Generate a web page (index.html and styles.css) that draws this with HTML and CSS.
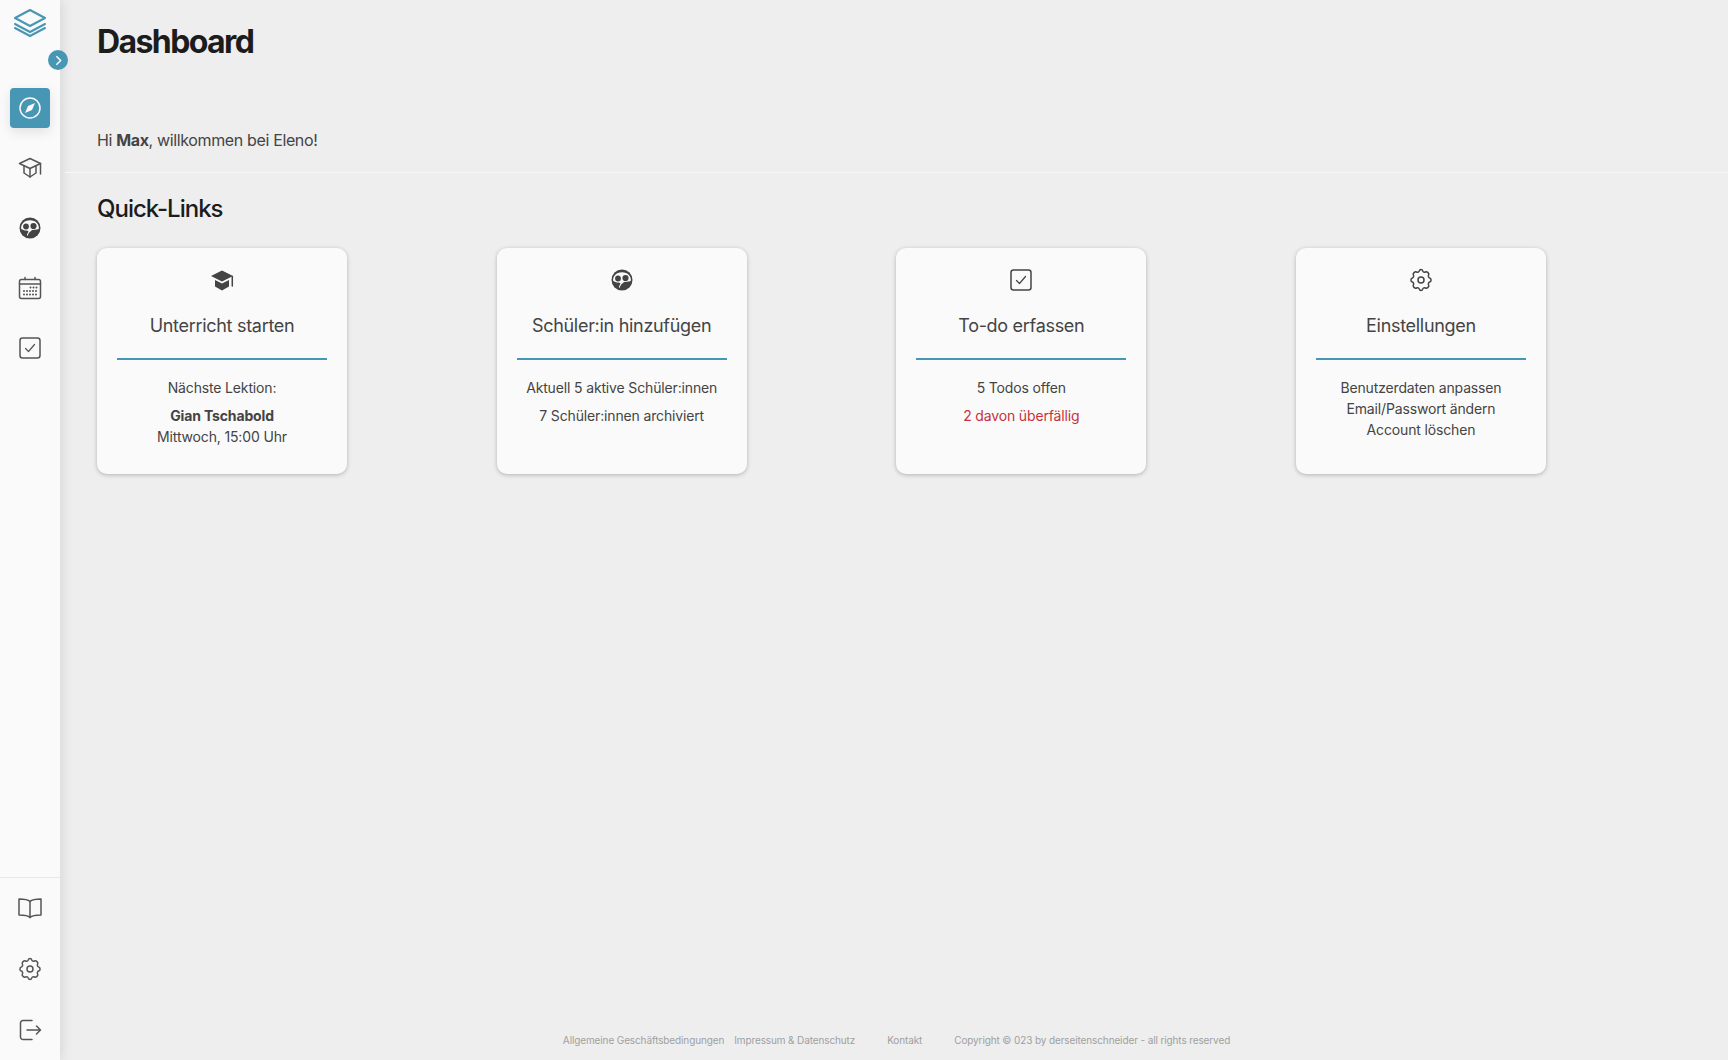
FILE: index.html
```html
<!DOCTYPE html>
<html lang="de">
<head>
    <meta charset="UTF-8">
    <meta name="viewport" content="width=device-width, initial-scale=1.0">
    <title>Eleno - Dashboard</title>
    <link rel="stylesheet" href="styles.css">
</head>
<body>
    <svg class="icon-defs" width="0" height="0">
        <symbol id="i-cap" viewBox="0 0 24 24">
            <path d="M12 2.500 1.500 7.500l10.500 5 10.500-5z"/>
            <path d="M6 10v7l6 4 6-4v-7"/>
            <path d="M12 12.500V21"/>
            <path d="M22.500 7.500V18"/>
        </symbol>
        <symbol id="i-students" viewBox="0 0 24 24">
            <circle class="solid" cx="12" cy="12" r="10.500"/>
            <path class="solid-light" d="M3.200 13c-.6-4.500 2.800-8.700 8.800-8.700s9.500 4.200 8.800 8.700l-1.800 .5-5 .6-3 3-1.500 3.200-1-3.500-2.500-2.500z"/>
            <circle class="solid" cx="8" cy="10.500" r="2.900"/>
            <circle class="solid" cx="15.500" cy="10" r="3.100"/>
            <path class="solid" d="M4.500 15.500c1-1.300 5-1.300 6 0l-1.500 3-1.500.5zM10 20.500c.4-3.800 2.500-5.500 6-5.500 1.600 0 3 .3 3.800 .9-1.500 3-4.400 5-7.800 5z"/>
        </symbol>
        <symbol id="i-calendar" viewBox="0 0 24 24">
            <rect x="1.500" y="3.500" width="21" height="19" rx="2"/>
            <path d="M1.500 8h21M7 1.500v2M17 1.500v2"/>
            <path class="dots" d="M12.500 11.500h.01M15.500 11.500h.01M18.500 11.500h.01M6 15h.01M9 15h.01M12 15h.01M15 15h.01M18 15h.01M6 18.500h.01M9 18.500h.01M12 18.500h.01M15 18.500h.01M18 18.500h.01"/>
        </symbol>
        <symbol id="i-check" viewBox="0 0 24 24">
            <rect x="2" y="2" width="20" height="20" rx="2.500"/>
            <path class="thin" d="m7.500 12.500 3 3 6-7"/>
        </symbol>
        <symbol id="i-gear" viewBox="0 0 24 24">
            <circle cx="12" cy="12" r="3"/>
            <path d="M10.300 2.900c.4-1.800 3-1.800 3.400 0a1.800 1.800 0 0 0 2.700 1.100c1.600-1 4.200 1.600 3.200 3.200a1.800 1.800 0 0 0 1.100 2.700c1.800.4 1.800 3.800 0 4.200a1.800 1.800 0 0 0-1.100 2.700c1 1.600-1.600 4.200-3.200 3.200a1.800 1.800 0 0 0-2.700 1.100c-.4 1.800-3 1.800-3.400 0a1.800 1.800 0 0 0-2.700-1.100c-1.600 1-4.200-1.600-3.200-3.200a1.800 1.800 0 0 0-1.100-2.700c-1.800-.4-1.800-3.800 0-4.200a1.800 1.800 0 0 0 1.100-2.700c-1-1.600 1.600-4.200 3.200-3.200a1.800 1.800 0 0 0 2.700-1.100z"/>
        </symbol>
    </svg>

    <div class="layout">
        <!-- Sidebar -->
        <aside class="sidebar">
            <div class="logo">
                <svg class="logo-icon" viewBox="0 0 32 30">
                    <path d="M16 2 1 10l15 8 15-8z"/>
                    <path d="m1 16 15 8 15-8"/>
                    <path d="m1 20 15 8 15-8"/>
                </svg>
            </div>
            <button class="sidebar-toggle">
                <svg viewBox="0 0 24 24"><path d="m9 5 7 7-7 7"/></svg>
            </button>

            <nav class="nav-top">
                <a class="nav-item active">
                    <svg class="icon" viewBox="0 0 24 24">
                        <circle cx="12" cy="12" r="10"/>
                        <path class="solid-light" d="m17 7-7 3-3 7 7-3z"/>
                    </svg>
                </a>
                <a class="nav-item"><svg class="icon"><use href="#i-cap"/></svg></a>
                <a class="nav-item"><svg class="icon"><use href="#i-students"/></svg></a>
                <a class="nav-item"><svg class="icon"><use href="#i-calendar"/></svg></a>
                <a class="nav-item"><svg class="icon"><use href="#i-check"/></svg></a>
            </nav>

            <nav class="nav-bottom">
                <a class="nav-item">
                    <svg class="icon" viewBox="0 0 24 24">
                        <path d="M12 5.500C10 3.500 5.500 3 1 3v16c4.500 0 9 .5 11 2.500 2-2 6.500-2.500 11-2.500V3c-4.500 0-9 .5-11 2.500z"/>
                        <path d="M12 5.500v16"/>
                    </svg>
                </a>
                <a class="nav-item"><svg class="icon"><use href="#i-gear"/></svg></a>
                <a class="nav-item">
                    <svg class="icon" viewBox="0 0 24 24">
                        <path d="M14 2.500H5A2.500 2.500 0 0 0 2.500 5v14A2.500 2.500 0 0 0 5 21.500h9"/>
                        <path d="M9 12h13.500M18.500 8l4 4-4 4"/>
                    </svg>
                </a>
            </nav>
        </aside>

        <main class="main">
            <div class="header">
                <h1>Dashboard</h1>
                <p class="welcome">Hi <b>Max</b>, willkommen bei Eleno!</p>
            </div>

            <section class="quick-links">
                <h2>Quick-Links</h2>
                <div class="cards">
                    <div class="card">
                        <svg class="card-icon" viewBox="0 0 24 24">
                            <path class="solid" d="M12 2.500 1 8l11 5.500L23 8z"/>
                            <path class="solid" d="m5 12 7 3.500 7-3.500v6.500l-7 4-7-4z"/>
                            <path d="M22.300 8.500V18"/>
                        </svg>
                        <h3>Unterricht starten</h3>
                        <div class="card-text">
                            <p>Nächste Lektion:</p>
                            <p><b>Gian Tschabold</b><br>Mittwoch, 15:00 Uhr</p>
                        </div>
                    </div>

                    <div class="card">
                        <svg class="card-icon"><use href="#i-students"/></svg>
                        <h3>Schüler:in hinzufügen</h3>
                        <div class="card-text">
                            <p>Aktuell 5 aktive Schüler:innen</p>
                            <p>7 Schüler:innen archiviert</p>
                        </div>
                    </div>

                    <div class="card">
                        <svg class="card-icon"><use href="#i-check"/></svg>
                        <h3>To-do erfassen</h3>
                        <div class="card-text">
                            <p>5 Todos offen</p>
                            <p class="warning">2 davon überfällig</p>
                        </div>
                    </div>

                    <div class="card">
                        <svg class="card-icon"><use href="#i-gear"/></svg>
                        <h3>Einstellungen</h3>
                        <div class="card-text">
                            <p>Benutzerdaten anpassen<br>Email/Passwort ändern<br>Account löschen</p>
                        </div>
                    </div>
                </div>
            </section>

            <footer class="footer">
                <a>Allgemeine Geschäftsbedingungen</a>
                <a>Impressum &amp; Datenschutz</a>
                <a class="contact">Kontakt</a>
                <span class="copyright">Copyright © 023 by derseitenschneider - all rights reserved</span>
            </footer>
        </main>
    </div>
</body>
</html>
```

FILE: styles.css
```css
* {
    margin: 0;
    padding: 0;
    box-sizing: border-box;
}

body {
    font-family: 'Inter', 'Noto Sans', sans-serif;
    background: #eeeeee;
    color: #444444;
    height: 100vh;
    overflow: hidden;
}

.icon-defs {
    position: absolute;
}

.layout {
    display: flex;
    height: 100vh;
}

/* Sidebar */
.sidebar {
    position: relative;
    width: 60px;
    flex-shrink: 0;
    background: #fafafa;
    box-shadow: 2px 0 12px rgba(0, 0, 0, 0.1);
    display: flex;
    flex-direction: column;
    padding-top: 8px;
}

.logo {
    display: flex;
    justify-content: center;
    height: 80px;
}

.logo-icon {
    width: 32px;
    height: 30px;
    fill: none;
    stroke: #4696b4;
    stroke-width: 2;
    stroke-linejoin: round;
    stroke-linecap: round;
}

.sidebar-toggle {
    position: absolute;
    top: 50px;
    left: 48px;
    width: 20px;
    height: 20px;
    border: none;
    border-radius: 50%;
    background: #4696b4;
    display: flex;
    align-items: center;
    justify-content: center;
}

.sidebar-toggle svg {
    width: 13px;
    height: 13px;
    fill: none;
    stroke: #fafafa;
    stroke-width: 3;
    stroke-linecap: round;
    stroke-linejoin: round;
}

.nav-top {
    display: flex;
    flex-direction: column;
    align-items: center;
    gap: 20px;
    flex: 1;
}

.nav-bottom {
    display: flex;
    flex-direction: column;
    align-items: center;
    gap: 21px;
    border-top: 1px solid #e8e8e8;
    padding-top: 10px;
    padding-bottom: 10px;
}

.nav-item {
    width: 40px;
    height: 40px;
    border-radius: 4px;
    display: flex;
    align-items: center;
    justify-content: center;
    color: #555555;
}

.nav-item.active {
    background: #4696b4;
    color: #fafafa;
    box-shadow: 0 4px 12px rgba(0, 0, 0, 0.1);
}

.icon {
    width: 24px;
    height: 24px;
    fill: none;
    stroke: currentColor;
    stroke-width: 1.500;
    stroke-linecap: round;
    stroke-linejoin: round;
}

.solid {
    fill: #444444;
    stroke: none;
}

.solid-light {
    fill: #fafafa;
    stroke: none;
}

.thin {
    stroke-width: 1.200;
}

.dots {
    stroke-width: 2;
}

/* Main */
.main {
    position: relative;
    flex: 1;
    min-width: 0;
    display: flex;
    flex-direction: column;
}

.header {
    margin-left: 5px;
    padding: 21px 0 21px 32px;
    border-bottom: 1px solid #f7f7f7;
}

h1 {
    font-size: 32px;
    line-height: 42px;
    font-weight: 700;
    color: #1c1c1c;
    letter-spacing: -1.600px;
    margin-bottom: 66px;
}

.welcome {
    font-size: 16px;
    line-height: 22px;
    letter-spacing: -0.360px;
}

.quick-links {
    padding: 20px 182px 0 37px;
}

h2 {
    font-size: 24px;
    line-height: 32px;
    font-weight: 500;
    color: #1c1c1c;
    letter-spacing: -1px;
    margin-bottom: 23px;
}

.cards {
    display: flex;
    justify-content: space-between;
}

.card {
    width: 250px;
    height: 226px;
    background: #fafafa;
    border-radius: 10px;
    box-shadow: 0 1px 4px rgba(0, 0, 0, 0.25);
    padding: 20px 20px 0;
    text-align: center;
}

.card-icon {
    display: block;
    width: 24px;
    height: 24px;
    margin: 0 auto;
    fill: none;
    stroke: #444444;
    stroke-width: 1.500;
    stroke-linecap: round;
    stroke-linejoin: round;
}

h3 {
    font-size: 18px;
    line-height: 24px;
    font-weight: 400;
    padding: 22px 0 20px;
    border-bottom: 2px solid #4696b4;
    letter-spacing: -0.300px;
}

.card-text {
    padding-top: 17px;
    font-size: 14px;
    line-height: 21px;
    letter-spacing: -0.150px;
}

.card-text p {
    margin-bottom: 7px;
}

.card-text b {
    font-weight: 700;
}

.warning {
    color: #c8323c;
}

.footer {
    margin-top: auto;
    padding: 0 0 13px 5px;
    display: flex;
    justify-content: center;
    font-size: 10px;
    line-height: 14px;
    color: #a0a0a0;
    letter-spacing: -0.120px;
}

.footer a {
    margin-right: 10px;
}

.footer .contact {
    margin-left: 22px;
    margin-right: 32px;
}
```
